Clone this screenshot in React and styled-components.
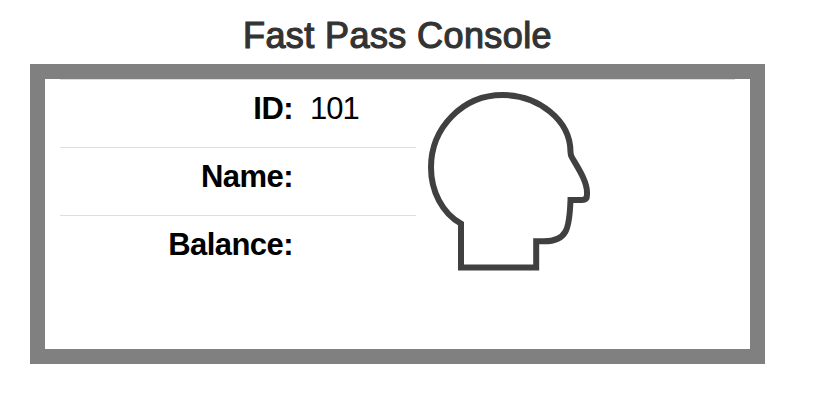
import React from "react";
import styled, { createGlobalStyle } from "styled-components";

const GlobalStyle = createGlobalStyle`
  * { box-sizing: border-box; }
  body { margin: 0; background: #fff; color: #000; font-family: "Liberation Sans", Arial, sans-serif; }
`;
const Console = styled.main`
  width: 735px;
  margin-left: 30px;
`;
const Title = styled.h1`
  margin: 0;
  height: 64px;
  padding-top: 15px;
  font-size: 36px;
  line-height: 41px;
  font-weight: 400;
  letter-spacing: 0.4px;
  -webkit-text-stroke: 1.2px #333;
  color: #333;
  text-align: center;
`;
const Panel = styled.section`
  height: 300px;
  padding: 0 15px;
  border: 15px solid #808080;
`;
const Record = styled.div`
  display: flex;
  border-top: 1px solid #ddd;
`;
const Details = styled.dl`
  width: 356px;
  margin: 0;
`;
const Field = styled.div`
  display: grid;
  grid-template-columns: 233px 1fr;
  column-gap: 17px;
  height: ${(p) => (p.$last ? "67px" : "68px")};
  padding-top: 11px;
  border-bottom: ${(p) => (p.$last ? "0" : "1px solid #ddd")};
  font-size: 31px;
  line-height: 36px;
  letter-spacing: -0.55px;
`;
const Label = styled.dt`
  font-weight: 700;
  text-align: right;
`;
const Value = styled.dd`
  margin: 0;
  letter-spacing: -1px;
`;
const Portrait = styled.svg`
  width: 176px;
  height: 196px;
  margin: 5px 0 0 4px;
`;

const fields = [["ID:", "101"], ["Name:", ""], ["Balance:", ""]];

export default function App() {
  return (
    <Console>
      <GlobalStyle />
      <Title>Fast Pass Console</Title>
      <Panel>
        <Record>
          <Details>
            {fields.map(([label, value], i) => (
              <Field key={label} $last={i === fields.length - 1}>
                <Label>{label}</Label>
                <Value>{value}</Value>
              </Field>
            ))}
          </Details>
          <Portrait viewBox="420 85 176 196" fill="none" stroke="#404040" strokeWidth="6" aria-label="Profile">
            <path d="M461 267.6V223.7C442 213 431 191 431 167.5A71.5 72.5 0 0 1 502.5 95C538 95 570.5 120 570.5 152Q570.5 155 572 157.5C578 168 587 181 587 192.5V195Q587 200 582 200H570.5C569.5 229 567 241.3 544 241.3H536.2V267.6Z" />
          </Portrait>
        </Record>
      </Panel>
    </Console>
  );
}
